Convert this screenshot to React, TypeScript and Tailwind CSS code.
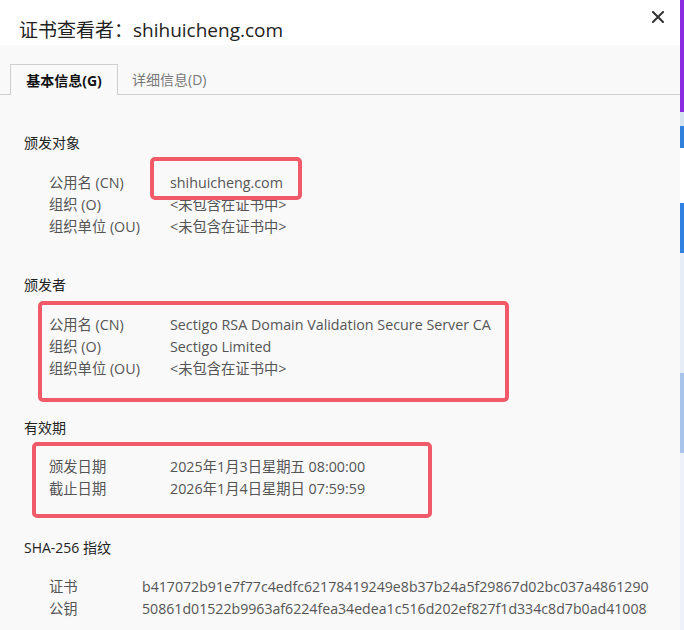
import React from "react";

const font = { fontFamily: '"Open Sans", "Noto Sans CJK SC", sans-serif' };

function Row({ label, value, valueLeft = 170, hash = false }: { label: string; value: string; valueLeft?: number; hash?: boolean }) {
  return (
    <div className={`flex h-[22px] items-center leading-[22px] text-[#555] ${hash ? "text-[14.15px]" : "text-[14.3px]"}`}>
      <div className="pl-[49px] shrink-0 text-[14.3px]" style={{ width: valueLeft }}>{label}</div>
      <div className="whitespace-nowrap">{value}</div>
    </div>
  );
}

export default function App() {
  return (
    <div className="w-[684px] h-[630px] flex overflow-hidden" style={font}>
      <div className="relative w-[680px] h-[630px] flex flex-col bg-[#f9f9f9]">
        {/* header */}
        <div className="h-[45px] bg-white flex items-start relative shrink-0">
          <div className="pl-[19px] pt-[16px] text-[19px] leading-[28px] text-[#222] whitespace-nowrap">
            证书查看者：shihuicheng.com
          </div>
          <svg className="absolute left-[652px] top-[11px]" width="12" height="12" viewBox="0 0 12 12">
            <path d="M1 1 L11 11 M11 1 L1 11" stroke="#333" strokeWidth="2" strokeLinecap="square" />
          </svg>
        </div>
        {/* tabs */}
        <div className="mt-[19px] h-[31px] flex items-stretch border-b border-[#cfcfcf] shrink-0">
          <div className="ml-[10px] w-[108px] border border-b-0 border-[#cfcfcf] bg-[#f9f9f9] -mb-px flex items-center justify-center text-[14px] font-bold text-[#111]">
            基本信息(G)
          </div>
          <div className="ml-[14px] flex items-center text-[14px] text-[#777]">详细信息(D)</div>
        </div>

        {/* section 1 */}
        <div className="mt-[37px] pl-[24px] text-[14px] leading-[22px] text-[#222]">颁发对象</div>
        <div className="mt-[18px]">
          <Row label="公用名 (CN)" value="shihuicheng.com" />
          <Row label="组织 (O)" value="<未包含在证书中>" />
          <Row label="组织单位 (OU)" value="<未包含在证书中>" />
        </div>

        {/* section 2 */}
        <div className="mt-[36px] pl-[24px] text-[14px] leading-[22px] text-[#222]">颁发者</div>
        <div className="mt-[18px]">
          <Row label="公用名 (CN)" value="Sectigo RSA Domain Validation Secure Server CA" />
          <Row label="组织 (O)" value="Sectigo Limited" />
          <Row label="组织单位 (OU)" value="<未包含在证书中>" />
        </div>

        {/* section 3 */}
        <div className="mt-[37px] pl-[24px] text-[14px] leading-[22px] text-[#222]">有效期</div>
        <div className="mt-[17px]">
          <Row label="颁发日期" value="2025年1月3日星期五 08:00:00" />
          <Row label="截止日期" value="2026年1月4日星期日 07:59:59" />
        </div>

        {/* section 4 */}
        <div className="mt-[37px] pl-[24px] text-[14px] leading-[22px] text-[#222]">SHA-256 指纹</div>
        <div className="mt-[17px]">
          <Row label="证书" value="b417072b91e7f77c4edfc62178419249e8b37b24a5f29867d02bc037a4861290" valueLeft={142} hash />
          <Row label="公钥" value="50861d01522b9963af6224fea34edea1c516d202ef827f1d334c8d7b0ad41008" valueLeft={142} hash />
        </div>

        {/* annotation boxes */}
        <div className="absolute left-[150px] top-[157px] w-[152px] h-[43px] border-4 border-[#f25a6a] rounded-[5px]" />
        <div className="absolute left-[38px] top-[301px] w-[471px] h-[101px] border-4 border-[#f25a6a] rounded-[5px]" />
        <div className="absolute left-[32px] top-[442px] w-[400px] h-[76px] border-4 border-[#f25a6a] rounded-[5px]" />
      </div>
      {/* background sliver */}
      <div className="w-[4px] h-[630px] flex flex-col shrink-0">
        <div className="h-[112px] bg-[#8a2be2]" />
        <div className="h-[14px] bg-[#d5e2ef]" />
        <div className="h-[22px] bg-[#2f7fdd]" />
        <div className="h-[55px] bg-[#ffffff]" />
        <div className="h-[50px] bg-[#2f80e0]" />
        <div className="h-[120px] bg-[#e6edf6]" />
        <div className="h-[80px] bg-[#a9c4ea]" />
        <div className="h-[177px] bg-[#eef2f8]" />
      </div>
    </div>
  );
}
